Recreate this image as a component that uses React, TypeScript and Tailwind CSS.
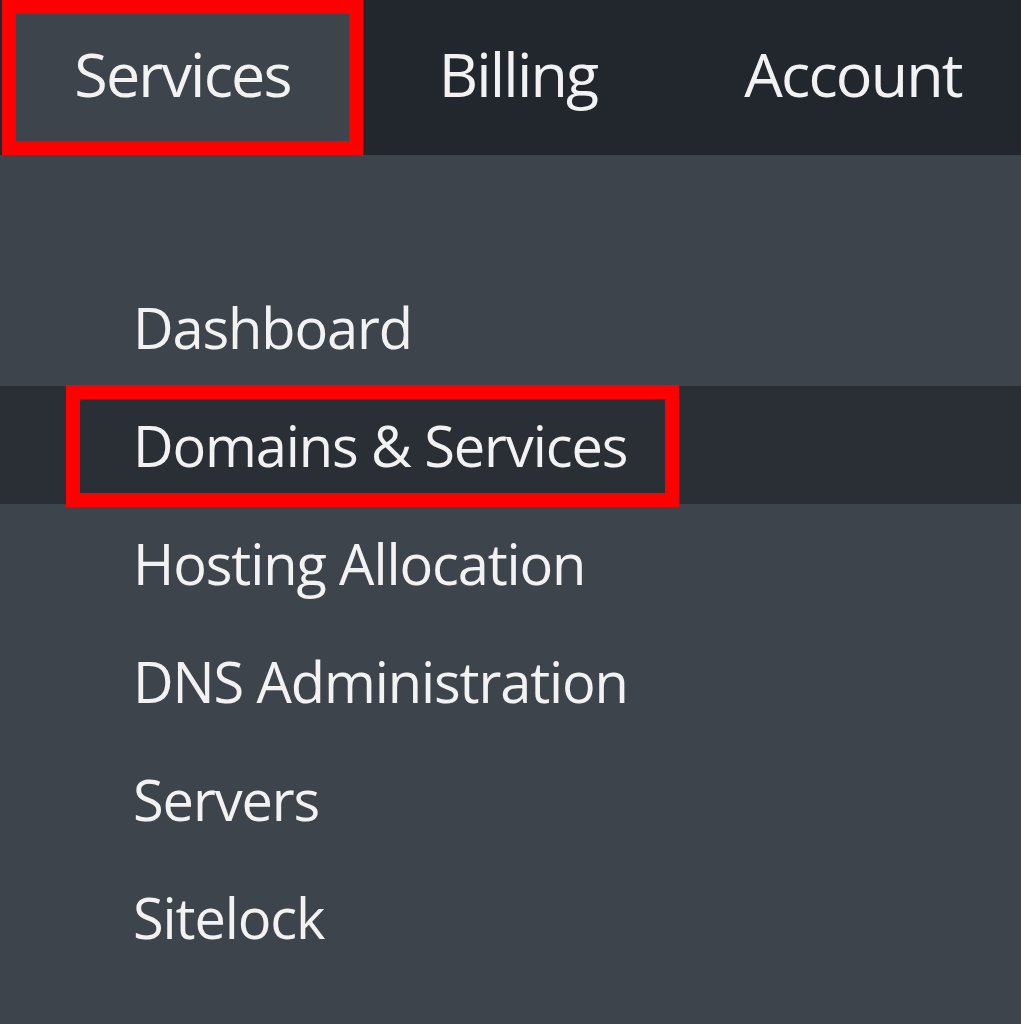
export default function App() {
  const items = [
    "Dashboard",
    "Domains & Services",
    "Hosting Allocation",
    "DNS Administration",
    "Servers",
    "Sitelock",
  ];
  const active = "Domains & Services";

  return (
    <div
      className="min-h-[1024px] w-full overflow-hidden bg-[#3e444b] text-[#f2f2f2]"
      style={{ fontFamily: '"Open Sans", "Noto Sans", sans-serif' }}
    >
      {/* top nav */}
      <nav className="flex h-[155px] bg-[#22272e] pl-[2px] font-medium">
        <div className="flex w-[361px] shrink-0 items-center justify-center border-[14px] border-[#ff0000] bg-[#3e444b] pb-[8px] text-[61px] tracking-[-0.03em]">
          Services
        </div>
        <div className="flex w-[310px] shrink-0 items-center justify-center pb-[8px] text-[61px] tracking-[-0.03em]">
          Billing
        </div>
        <div className="flex w-[360px] shrink-0 items-center justify-center pb-[8px] text-[61px] tracking-[-0.03em]">
          Account
        </div>
      </nav>

      {/* dropdown */}
      <ul className="pt-[113px] font-medium">
        {items.map((label) => (
          <li
            key={label}
            className={
              label === active
                ? "relative flex h-[118px] items-center bg-[#2a2e35] pl-[133px] text-[56px] tracking-[-0.02em]"
                : "flex h-[118px] items-center pl-[133px] text-[56px] tracking-[-0.02em]"
            }
          >
            {label}
            {label === active && (
              <span className="pointer-events-none absolute left-[66px] top-[-1px] h-[122px] w-[613px] border-[14px] border-[#ff0000]" />
            )}
          </li>
        ))}
      </ul>
    </div>
  );
}
